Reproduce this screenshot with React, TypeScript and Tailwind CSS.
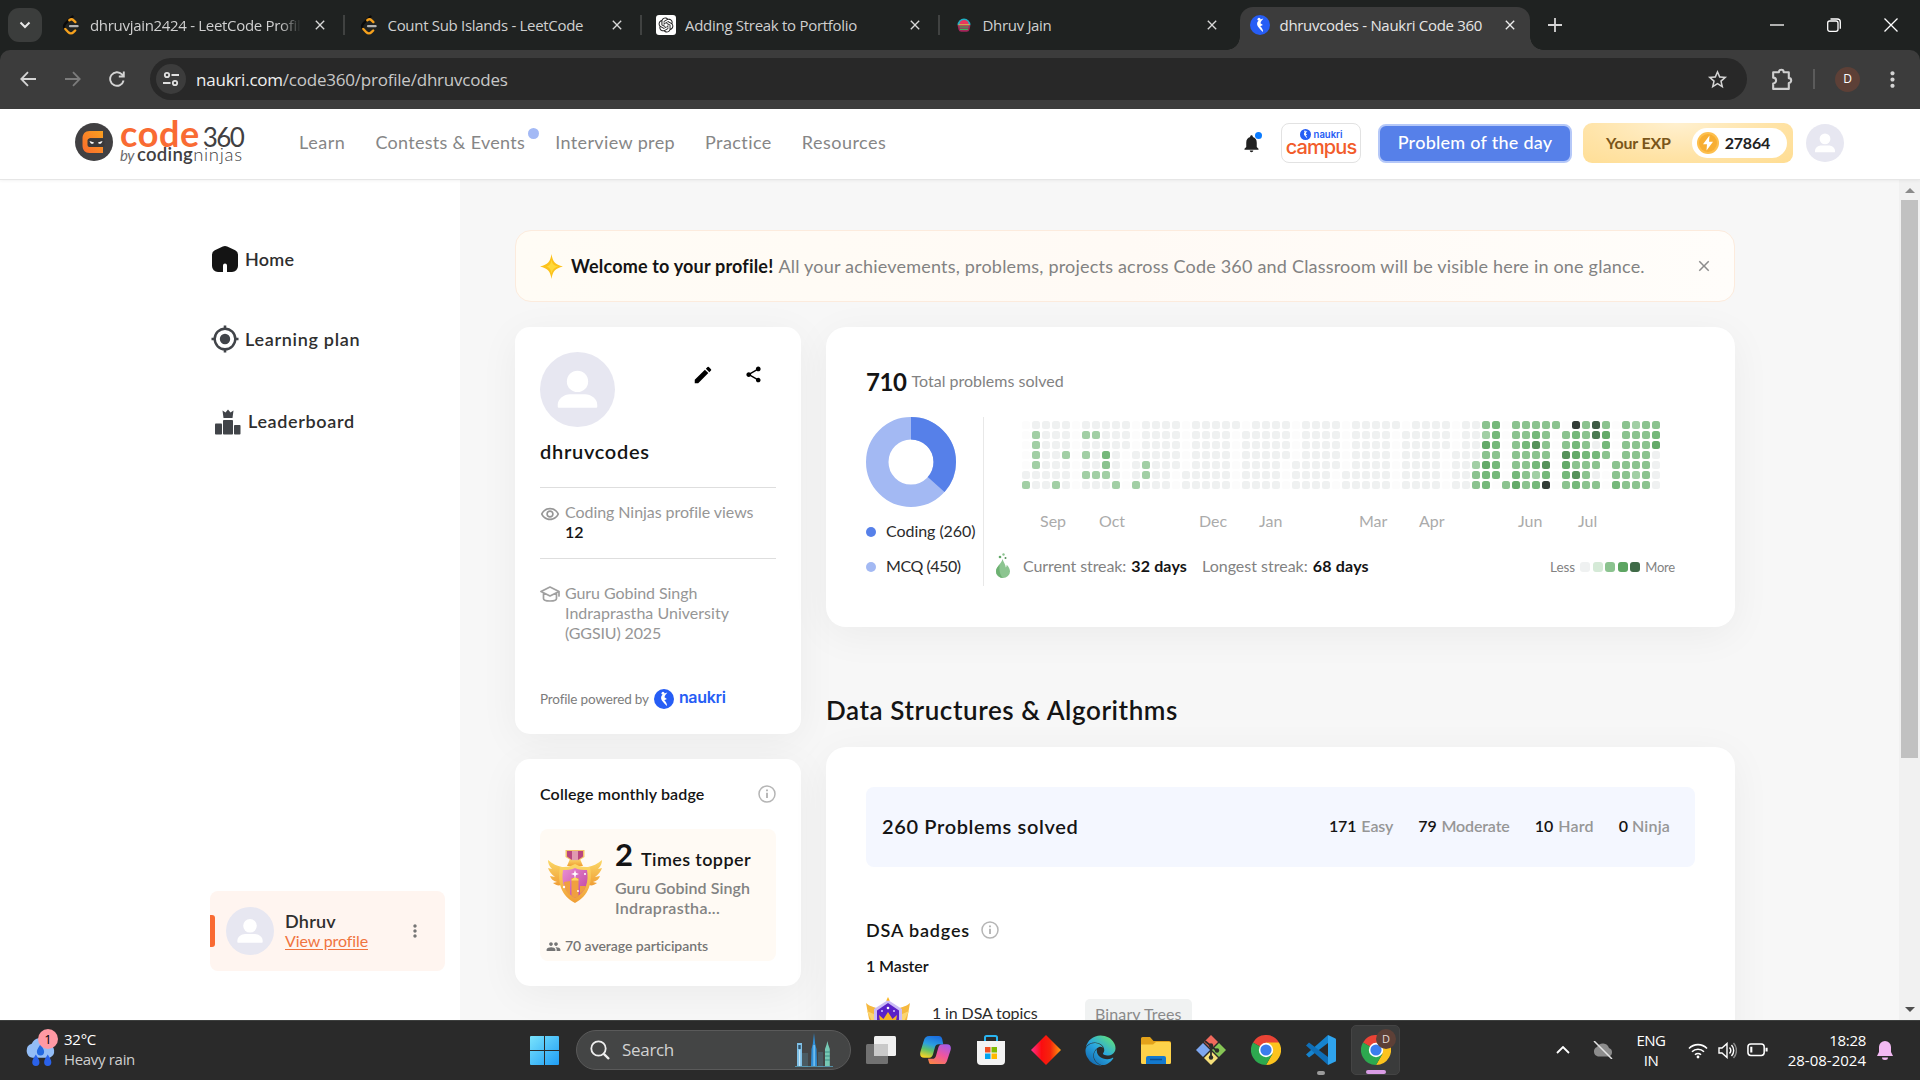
import type { ReactNode } from "react";
import { RiOpenaiFill } from "react-icons/ri";
import { FaEdge } from "react-icons/fa";
import {
  MdModeEdit,
  MdShare,
  MdGroup,
  MdOutlineRemoveRedEye,
  MdNotifications,
  MdStarBorder,
  MdMoreVert,
  MdClose,
} from "react-icons/md";

const segoe = "font-['Open_Sans',sans-serif]";

function LeetCodeIcon() {
  return (
    <svg viewBox="0 0 20 20" className="size-5" fill="none" strokeWidth="2.4" strokeLinecap="round">
      <path d="M11.500 1.500 4.500 8.300c-1.800 1.900-1.800 3.600-.6 5.200" stroke="#0a0a0a" />
      <path d="m4.300 14 3 3.200c1.600 1.600 3.600 1.600 5.200 0l1.700-1.700" stroke="#f5a11d" />
      <path d="M8.300 5.200c1.500-1.200 3-1.100 4.300.1l1.800 1.800" stroke="#f5a11d" />
      <path d="M9 11.200h7.600" stroke="#b3b3b3" strokeWidth="2.200" />
    </svg>
  );
}

function NaukriIcon({ className }: { className: string }) {
  return (
    <svg viewBox="0 0 20 20" className={className}>
      <circle cx="10" cy="10" r="10" fill="#265df5" />
      <circle cx="9" cy="4.300" r="1.500" fill="#fff" />
      <path d="M13.400 3.600c-4.600 1-6.900 3.400-6.100 6.600.4 1.700 2.600 3.700 5.700 6.800.2-2.200-1-4.200-2.700-5.800l2.600-1.300-2.400-1.700c.2-1.600 1.700-2.900 2.900-4.600z" fill="#fff" />
    </svg>
  );
}

function PortfolioIcon() {
  return (
    <svg viewBox="0 0 20 20" className="size-5">
      <path d="M3.500 10a6.500 6.500 0 0 1 13 0z" fill="#1fb0c4" />
      <path d="M5.500 9.500a4.500 4.500 0 0 1 9.200 0z" fill="#e8365f" />
      <path d="M3.500 10h13l-1 4.500a3 3 0 0 1-3 2.200h-5a3 3 0 0 1-3-2.200z" fill="#a3265a" />
      <path d="M5.500 12h9M6 14.300h8" stroke="#39b85c" strokeWidth="1.200" />
      <path d="M4.500 9.800h11" stroke="#f0b93a" strokeWidth="1" />
    </svg>
  );
}

function Avatar({ className }: { className: string }) {
  return (
    <svg viewBox="0 0 74 74" className={className}>
      <circle cx="37" cy="37" r="37" fill="#e7e7f1" />
      <circle cx="37" cy="29" r="10.500" fill="#fff" />
      <path d="M17.500 54v-2c0-6 6.500-10.300 12-10.300h15c5.500 0 12 4.300 12 10.300v2a1 1 0 0 1-1 1h-37a1 1 0 0 1-1-1z" fill="#fff" />
    </svg>
  );
}

function InfoIcon() {
  return (
    <svg viewBox="0 0 18 18" className="size-[18px]" fill="none" stroke="#b5b5b5" strokeWidth="1.500">
      <circle cx="9" cy="9" r="8" />
      <path d="M9 7.800v5.200M9 4.600v1.700" strokeWidth="1.900" />
    </svg>
  );
}

function Tab({ icon, title, tracking, fade }: { icon: ReactNode; title: string; tracking: string; fade?: boolean }) {
  return (
    <div className="flex h-[50px] w-[297.5px] shrink-0 items-center pl-[14px]">
      <span className="flex size-5 items-center justify-center">{icon}</span>
      <span
        className={`ml-[9px] h-6 flex-1 overflow-hidden text-[15px] leading-6 whitespace-nowrap text-[#d0d0d0] ${tracking} ${
          fade ? "[mask-image:linear-gradient(to_right,black_90%,transparent)]" : ""
        }`}
      >
        {title}
      </span>
      <MdClose className="ml-[11px] size-[16px] text-[#d8d8d8]" />
      <span className="ml-[15px] h-[20px] w-[2px] bg-[#404241]" />
    </div>
  );
}

function BrowserTabs() {
  return (
    <div className={`flex h-[50px] items-center bg-[#1f2221] pl-2 ${segoe}`}>
      <div className="mr-[5px] flex size-[34px] items-center justify-center rounded-[11px] bg-[#3b3d3c]">
        <svg viewBox="0 0 12 12" className="size-3" fill="none" stroke="#e8e8e8" strokeWidth="2">
          <path d="m1.500 3.500 4.500 4.500 4.500-4.500" />
        </svg>
      </div>
      <Tab icon={<LeetCodeIcon />} title="dhruvjain2424 - LeetCode Profile" tracking="tracking-[-0.31px]" fade />
      <Tab icon={<LeetCodeIcon />} title="Count Sub Islands - LeetCode" tracking="tracking-[-0.31px]" />
      <Tab
        icon={
          <span className="flex size-5 items-center justify-center rounded-[3px] bg-white">
            <RiOpenaiFill className="size-[18px] text-[#222]" />
          </span>
        }
        title="Adding Streak to Portfolio"
        tracking="tracking-[-0.29px]"
      />
      <div className="flex h-[50px] w-[300px] shrink-0 items-center pl-[14px]">
        <PortfolioIcon />
        <span className="ml-[9px] flex-1 text-[15px] tracking-[-0.32px] text-[#d0d0d0]">Dhruv Jain</span>
        <MdClose className="mr-[20px] size-[16px] text-[#d8d8d8]" />
      </div>
      <div className="flex h-[50px] items-end">
        <span className="-ml-[13px] size-[13px] bg-[radial-gradient(circle_at_0_0,transparent_12.500px,#3c3c3c_13px)]" />
        <div className="flex h-[43px] w-[290px] items-center rounded-t-[13px] bg-[#3c3c3c] pb-[7px] pl-[10px]">
          <NaukriIcon className="size-5" />
          <span className="ml-[10px] flex-1 text-[15px] tracking-[-0.3px] whitespace-nowrap text-[#e6e6e6]">
            dhruvcodes - Naukri Code 360
          </span>
          <MdClose className="mr-[12px] size-[16px] text-[#ececec]" />
        </div>
        <span className="size-[13px] bg-[radial-gradient(circle_at_100%_0,transparent_12.500px,#3c3c3c_13px)]" />
      </div>
      <svg viewBox="0 0 14 14" className="ml-[5px] size-[14px]" stroke="#d5d5d5" strokeWidth="1.800">
        <path d="M7 0v14M0 7h14" />
      </svg>
      <div className="ml-auto flex items-center text-white">
        <svg viewBox="0 0 14 14" className="mr-[43px] size-[14px]" stroke="currentColor" strokeWidth="1.300">
          <path d="M0 7h14" />
        </svg>
        <svg viewBox="0 0 14 14" className="mr-[43px] size-[14px]" fill="none" stroke="currentColor" strokeWidth="1.300">
          <rect x="0.700" y="3" width="10.300" height="10.300" rx="2" />
          <path d="M3.500 1h6.800a3 3 0 0 1 3 3v6.800" />
        </svg>
        <svg viewBox="0 0 14 14" className="mr-[22px] size-[14px]" stroke="currentColor" strokeWidth="1.300">
          <path d="m.5.5 13 13M13.500.5l-13 13" />
        </svg>
      </div>
    </div>
  );
}

function AddressBar() {
  return (
    <div className="h-[59px] bg-[#1f2221]">
      <div className={`flex h-[59px] items-center rounded-t-[10px] bg-[#3c3c3c] pb-px pl-[20px] text-[#d0d0d0] ${segoe}`}>
        <svg viewBox="0 0 16 16" className="size-4 shrink-0" fill="none" stroke="#d4d4d4" strokeWidth="1.800">
          <path d="M16 8H1.500M8 1.200 1.300 8 8 14.800" />
        </svg>
        <svg viewBox="0 0 16 16" className="ml-[29px] size-4 shrink-0" fill="none" stroke="#7b7b7b" strokeWidth="1.800">
          <path d="M0 8h14.500M8 1.200 14.700 8 8 14.800" />
        </svg>
        <svg viewBox="0 0 16 16" className="ml-[28px] size-4 shrink-0" fill="none" stroke="#d4d4d4" strokeWidth="1.900">
          <path d="M14.600 9.500A6.800 6.800 0 1 1 13 3.400l1.500 1.600M14.800.5v5h-5" />
        </svg>
        <div className="ml-[25px] flex h-[42px] w-[1597px] shrink-0 items-center rounded-full bg-[#282828] pl-[6px]">
          <span className="flex size-[30px] items-center justify-center rounded-full bg-[#3c3c3c]">
            <svg viewBox="0 0 16 16" className="size-4" fill="none" stroke="#e0e0e0" strokeWidth="1.800">
              <circle cx="4" cy="4" r="2.200" />
              <circle cx="12" cy="12" r="2.200" />
              <path d="M8.500 4H16M0 12h7.500" />
            </svg>
          </span>
          <span className="ml-[10px] flex-1 pt-px text-[17px] tracking-[-0.22px] text-[#c8c8c8]">
            <span className="text-[#f0f0f0]">naukri.com</span>/code360/profile/dhruvcodes
          </span>
          <MdStarBorder className="mr-[18px] size-[23px] text-[#d4d4d4]" />
        </div>
        <svg viewBox="0 0 24 24" className="ml-[22px] size-[25px] shrink-0" fill="none" stroke="#cfcfcf" strokeWidth="2" strokeLinejoin="round">
          <path d="M4 5h5.500a2.300 2.300 0 0 1 4.600 0H19v5.700a2.300 2.300 0 0 1 0 4.600V21H4v-5.200a2.800 2.800 0 0 0 0-5.600z" />
        </svg>
        <span className="ml-[19px] h-5 w-[2px] bg-[#5b5b5b]" />
        <span className="ml-[20px] flex size-[25px] items-center justify-center rounded-full bg-[#5d4037] text-[12px] text-white">
          D
        </span>
        <MdMoreVert className="ml-[20px] size-[25px] text-[#d4d4d4]" />
      </div>
    </div>
  );
}

function Code360Logo() {
  return (
    <div className="flex w-[170px] items-center">
      <svg viewBox="0 0 38 38" className="-mt-[3px] size-[38px]">
        <defs>
          <linearGradient id="ninja" x1="0" y1="1" x2="1" y2="0">
            <stop offset="0" stopColor="#fb6a2d" />
            <stop offset="1" stopColor="#f9a01f" />
          </linearGradient>
        </defs>
        <circle cx="19" cy="19" r="19" fill="#414042" />
        <path d="M28 8v7H14.500v9H28v6H14.500C10 30 7.500 27 7.500 22.500v-7C7.500 11 10 8 14.500 8z" fill="url(#ninja)" />
        <rect x="12.500" y="15.500" width="17" height="8.500" rx="2" fill="#3a393b" />
        <path d="m14.500 18 4.500 1.500c-.5 2-3.500 2-4.500-1.500zM27.500 18 23 19.500c.5 2 3.500 2 4.500-1.500z" fill="#fff" />
      </svg>
      <div className="-mt-[4px] ml-[7px] font-['Lato',sans-serif]">
        <div className="flex h-[26px] items-baseline pt-px leading-[27px] text-[#414042]">
          <span className="text-[36px] leading-[27px] font-bold tracking-[0.6px] text-[#f96b33]">code</span>
          <span className="ml-[3px] text-[26px] leading-[27px] tracking-[-1.6px]">360</span>
        </div>
        <div className="flex h-[19px] items-baseline text-[18.500px] leading-[19px] text-[#414042]">
          <span className="mr-[3px] text-[15px] tracking-[-0.5px] text-[#6b6a6c] italic">by</span>
          <span className="font-semibold tracking-[0.3px]">coding</span>
          <span className="font-light tracking-[0.7px]">ninjas</span>
        </div>
      </div>
    </div>
  );
}

function SiteHeader() {
  return (
    <header className="relative z-10 flex h-[71px] items-center border-b border-[#e6e6e6] bg-white pb-[2px] pl-[75px] text-[18px] text-[#868686] shadow-[0_1px_3px_rgba(0,0,0,0.05)]">
      <Code360Logo />
      <nav className="-mt-px ml-[54px] flex items-center whitespace-nowrap">
        <span className="tracking-[0.55px]">Learn</span>
        <span className="relative ml-[30px] tracking-[0.300px]">
          Contests &amp; Events
          <span className="absolute -top-[1px] -right-[14px] size-[11px] rounded-full bg-[#a3b9f5]" />
        </span>
        <span className="ml-[30px] tracking-[0.380px]">Interview prep</span>
        <span className="ml-[30px] tracking-[0.420px]">Practice</span>
        <span className="ml-[30px] tracking-[0.500px]">Resources</span>
      </nav>
      <div className="relative ml-auto">
        <MdNotifications className="size-[21px] text-[#212121]" />
        <span className="absolute -top-px right-0 size-[7px] rounded-full bg-[#0a7bff]" />
      </div>
      <div className="ml-[19px] flex h-[40px] w-[80px] flex-col items-center rounded-[8px] border border-[#e2e2e2]">
        <div className="mt-[5px] flex h-[11px] items-center">
          <NaukriIcon className="size-[11px]" />
          <span className="ml-[3px] font-['Inter',sans-serif] text-[9.500px] leading-[10px] font-semibold text-[#265df5]">naukri</span>
        </div>
        <span className="-mt-[2px] font-['Inter',sans-serif] text-[20px] leading-[19px] font-medium tracking-[-0.900px] text-[#f25c2b]">
          campus
        </span>
      </div>
      <div className="ml-[17px] flex h-[39px] w-[194px] items-center justify-center rounded-[8px] border-2 border-[#b5c8f8] bg-[#5680e9] pb-px font-medium tracking-[0.260px] text-white">
        Problem of the day
      </div>
      <div className="ml-[11px] flex h-[40px] w-[210px] items-center rounded-[9px] bg-[radial-gradient(ellipse_at_45%_0%,#fff0cf_0%,#ffe3a6_60%,#ffdd92_100%)] pl-[23px] text-[16px] font-bold text-[#7a561a]">
        <span className="tracking-[-0.180px]">Your EXP</span>
        <div className="ml-[21px] flex h-[30px] w-[95px] items-center rounded-full bg-white pl-[5px]">
          <svg viewBox="0 0 22 22" className="size-[22px]">
            <circle cx="11" cy="11" r="11" fill="#fdbf4d" />
            <circle cx="11" cy="11" r="9" fill="#f7ae33" />
            <path d="M12.500 3.500 6 12.200h4L9.500 18.500 16 9.800h-4z" fill="#fff" />
          </svg>
          <span className="ml-[6px] font-bold tracking-[-0.200px] text-[#222]">27864</span>
        </div>
      </div>
      <Avatar className="mr-[76px] ml-[13px] size-[38px]" />
    </header>
  );
}

function Sidebar() {
  return (
    <aside className="flex w-[460px] shrink-0 flex-col bg-white pl-[210px] text-[18px] font-semibold text-[#2f2f2f]">
      <div className="mt-[64px] flex h-[30px] items-center">
        <svg viewBox="0 0 26 26" className="ml-[2px] size-[26px]">
          <path d="M10.800.6a5 5 0 0 1 4.400 0l8 3.700A4.600 4.600 0 0 1 26 8.500V20a6 6 0 0 1-6 6h-5v-6.500a2 2 0 0 0-4 0V26H6a6 6 0 0 1-6-6V8.500a4.600 4.600 0 0 1 2.800-4.200z" fill="#141414" />
        </svg>
        <span className="ml-[7px] tracking-[0.250px]">Home</span>
      </div>
      <div className="mt-[50px] flex h-[30px] items-center">
        <svg viewBox="0 0 28 28" className="-mt-px ml-px size-[28px]" fill="none" stroke="#414449" strokeWidth="2.400">
          <circle cx="14" cy="14" r="10.300" />
          <circle cx="14" cy="14" r="5.200" fill="#414449" stroke="none" />
          <path d="M14 .5V4M14 24v3.500M.5 14H4M24 14h3.500" strokeWidth="2.600" />
        </svg>
        <span className="ml-[6px] tracking-[0.700px]">Learning plan</span>
      </div>
      <div className="mt-[52px] flex h-[30px] items-center">
        <svg viewBox="0 0 26 26" className="mt-px ml-[5px] size-[26px]" fill="#414449">
          <rect x="0" y="14.500" width="7" height="11" rx=".8" />
          <rect x="8" y="11" width="10" height="14.500" rx=".8" />
          <rect x="19" y="16" width="6.500" height="9.500" rx=".8" />
          <path d="m7.500 1.500 3 2L13 .5l2.500 3 3-2L17.500 9h-9z" />
        </svg>
        <span className="ml-[7px] tracking-[0.640px]">Leaderboard</span>
      </div>
      <div className="mt-auto mb-[49px] flex h-[80px] w-[235px] items-center rounded-[8px] bg-[#fff5f0]">
        <span className="h-[32px] w-[5px] rounded-r-[3px] bg-[#f96b33]" />
        <Avatar className="ml-[11px] size-[48px]" />
        <div className="ml-[11px] leading-5">
          <div className="tracking-[0.250px]">Dhruv</div>
          <div className="text-[16px] font-normal tracking-[-0.120px] text-[#f0743f] underline underline-offset-2">View profile</div>
        </div>
        <MdMoreVert className="mr-[20px] ml-auto size-5 text-[#757575]" />
      </div>
    </aside>
  );
}

function WelcomeBanner() {
  return (
    <div className="flex h-[72px] w-[1220px] items-center rounded-[16px] border border-[#fcebdd] bg-[linear-gradient(90deg,#fffcf5,#fffaf5_50%,#fffdfa)] pl-[23px] text-[18px] whitespace-nowrap">
      <svg viewBox="0 0 24 24" className="size-[25px]">
        <path d="M12 0c1.200 7.500 3.500 10.200 11 12-7.500 1.800-9.800 4.500-11 12-1.200-7.500-3.500-10.200-11-12C8.500 10.200 10.800 7.500 12 0z" fill="#fcc21b" />
        <path d="M12 5c.5 4.500 2.500 6.500 7 7-4 .8-6 2.500-7 7-.5-4.500-2.500-6.500-5-7 3-.5 4.500-2.500 5-7z" fill="#ffd93b" />
      </svg>
      <span className="ml-[7px] font-bold tracking-[0.180px] text-[#141414]">Welcome to your profile!</span>
      <span className="ml-[5px] tracking-[0.200px] text-[#828282]">
        All your achievements, problems, projects across Code 360 and Classroom will be visible here in one glance.
      </span>
      <MdClose className="mr-[21px] ml-auto size-[18px] text-[#8c8c8c]" />
    </div>
  );
}

const cardShadow = "shadow-[0_8px_40px_rgba(0,0,0,0.050)]";

function ProfileCard() {
  return (
    <section className={`flex h-[407px] flex-col rounded-[15px] bg-white px-[25px] pt-[25px] text-[16px] leading-5 text-[#969696] ${cardShadow}`}>
      <div className="flex items-start">
        <Avatar className="size-[75px]" />
        <MdModeEdit className="mt-[12px] mr-[-1px] ml-auto size-[22px] text-black" />
        <MdShare className="mt-[13px] mr-[13px] ml-[31px] size-[19px] text-black" />
      </div>
      <h2 className="mt-[11px] text-[20px] leading-[26px] font-semibold tracking-[0.700px] text-[#141414]">dhruvcodes</h2>
      <div className="mt-[23px] h-px bg-[#dedede]" />
      <div className="mt-[14px] flex">
        <MdOutlineRemoveRedEye className="mt-[2px] size-[20px] text-[#969696]" />
        <div className="ml-[5px]">
          <div className="tracking-[-0.060px] whitespace-nowrap">Coding Ninjas profile views</div>
          <div className="font-semibold text-[#141414]">12</div>
        </div>
      </div>
      <div className="mt-[16px] h-px bg-[#dedede]" />
      <div className="mt-[24px] flex">
        <svg viewBox="0 0 20 16" className="mt-[3px] h-4 w-5" fill="none" stroke="#a0a0a0" strokeWidth="1.700" strokeLinejoin="round" strokeLinecap="round">
          <path d="M10 1 1 5.500 10 10l9-4.500zM3.500 7v5.500c0 1.500 1.500 2.500 6.500 2.500s6.500-1 6.500-2.500V7M19 5.500V10" />
        </svg>
        <div className="ml-[5px] tracking-[-0.060px] whitespace-nowrap">
          <div>Guru Gobind Singh</div>
          <div className="tracking-[0.020px]">Indraprastha University</div>
          <div className="tracking-[-0.140px]">(GGSIU) 2025</div>
        </div>
      </div>
      <div className="mt-[45px] flex items-center">
        <span className="mt-px text-[13.500px] tracking-[-0.160px] text-[#7c7c7c]">Profile powered by</span>
        <NaukriIcon className="ml-[5px] size-[20px]" />
        <span className="-mt-[3px] ml-[5px] font-['Inter',sans-serif] text-[16px] font-semibold tracking-[-0.300px] text-[#265df5]">naukri</span>
      </div>
    </section>
  );
}

function MedalIcon() {
  return (
    <svg viewBox="0 0 56 53" className="h-[53px] w-[56px]">
      <defs>
        <linearGradient id="gold" x1="0" y1="0" x2="0" y2="1">
          <stop offset="0" stopColor="#fbd968" />
          <stop offset="1" stopColor="#f09e35" />
        </linearGradient>
        <linearGradient id="pink" x1="0" y1="0" x2="1" y2="1">
          <stop offset="0" stopColor="#e98fd3" />
          <stop offset="1" stopColor="#bd3f9f" />
        </linearGradient>
      </defs>
      <path d="M1 10c5 4 9 6 14 7l-1 18c-3 1-5 0-8-2l4-1c-4-1-6-3-7-6l5 1C4 24 2 21 1 18l4 1C2 16 1 13 1 10z" fill="url(#gold)" />
      <path d="M55 10c-5 4-9 6-14 7l1 18c3 1 5 0 8-2l-4-1c4-1 6-3 7-6l-5 1c4-3 6-6 7-9l-4 1c3-3 4-6 4-9z" fill="url(#gold)" />
      <path d="M23 9h10l3 7H20z" fill="url(#gold)" />
      <path d="M18.500 0h19v7l-6.500 4h-6l-6.500-4z" fill="#f2c46a" />
      <path d="M20 1h16v5.500L31 10h-6l-5-3.500z" fill="#b9467f" />
      <path d="M25 1h6v9h-6z" fill="#e09ab0" />
      <path d="M28 14c5 3 10 3 15 3 3 15-1 29-15 36C14 46 10 32 13 17c5 0 10 0 15-3z" fill="url(#gold)" />
      <path d="M28 18c4 2 8 2 12 2 2 12-1 22-12 28-11-6-14-16-12-28 4 0 8 0 12-2z" fill="url(#pink)" />
      <path d="M24.500 46V28h7v18L28 48zM17 32l6-1v14c-4-3-5.500-8-6-13zM39 36h-6v8c3-2 5-5 6-8z" fill="#f0a040" />
      <path d="M24.500 29.500 28 27l3.500 2.500v1h-7z" fill="#fbd968" />
      <path d="m28 20 1 3 3 1-3 1-1 3-1-3-3-1 3-1z" fill="#fff" />
      <circle cx="17" cy="37" r="1.200" fill="#fff" />
      <circle cx="38" cy="24" r="1" fill="#fff" />
      <circle cx="31" cy="41" r="1" fill="#fff" />
    </svg>
  );
}

function CollegeBadgeCard() {
  return (
    <section className={`h-[227px] rounded-[15px] bg-white px-[25px] pt-[25px] text-[16px] leading-5 font-semibold ${cardShadow}`}>
      <div className="flex h-5 items-center justify-between">
        <span className="tracking-[0.150px] text-[#141414]">College monthly badge</span>
        <InfoIcon />
      </div>
      <div className="mt-[25px] flex h-[132px] w-[236px] flex-col rounded-[8px] bg-[#fffaf4] pl-[6px]">
        <div className="flex">
          <div className="mt-[21px] ml-px">
            <MedalIcon />
          </div>
          <div className="mt-[7px] ml-[12px] whitespace-nowrap">
            <div className="flex h-[42px] items-baseline text-[#141414]">
              <span className="text-[31px] leading-[36px] font-bold">2</span>
              <span className="ml-[8px] text-[18px] tracking-[0.390px]">Times topper</span>
            </div>
            <div className="tracking-[0.060px] text-[#828282]">Guru Gobind Singh</div>
            <div className="tracking-[0.310px] text-[#828282]">Indraprastha...</div>
          </div>
        </div>
        <div className="mt-[18px] flex items-center text-[14px] tracking-[-0.050px] text-[#757575]">
          <MdGroup className="size-[15px]" />
          <span className="ml-[4px] leading-5">70 average participants</span>
        </div>
      </div>
    </section>
  );
}

const activity = [
  ".oooo.ooooo.oooo.ooooo.oooo.oooo.ooooo.oooo.oo23.22222.X2Y2.2122",
  ".1ooo.11ooo.oooo.oooo.ooooo.oooo.oooo.ooooo.oo13.2232.232Z4.2223",
  ".1ooo.ooooo.oooo.oooo.ooooo.oooo.oooo.ooooo.oo43.2352.232o3.2224",
  ".1oo1.1o3o.ooooo.oooo.ooooo.oooo.oooo.oooo.ooo22.2222.54332.222o",
  ".1ooo.oo2o.o1ooo.oooo.oooo.ooooo.oooo.oooo.oo143.2235.4222.2222o",
  "ooooo.111o.o1oo.ooooo.oooo.oooo.ooooo.oooo.oo233.3213.352o.2212o",
  "1oo1o.ooo1.1ooo.ooooo.oooo.oooo.ooooo.oooo.oo23.2423X.2322.3222o",
];

const shade: Record<string, string> = {
  ".": "bg-[#fcfcfc]",
  o: "bg-[#eff1f1]",
  "1": "bg-[#a2cfa5]",
  "2": "bg-[#8bc38f]",
  "3": "bg-[#75b87a]",
  "4": "bg-[#64aa69]",
  "5": "bg-[#56925b]",
  X: "bg-[#333d38]",
  Y: "bg-[#3e5b45]",
  Z: "bg-[#4b7a52]",
};

function Heatmap() {
  return (
    <div className="flex flex-col gap-[2px]">
      {activity.map((row, r) => (
        <div key={r} className="flex gap-[2px]">
          {row.split("").map((c, i) => (
            <span key={i} className={`size-2 rounded-[2.500px] ${shade[c]}`} />
          ))}
        </div>
      ))}
    </div>
  );
}

const months: [string, string][] = [
  ["Sep", "ml-[18px] w-[59px]"],
  ["Oct", "w-[100px]"],
  ["Dec", "w-[60px]"],
  ["Jan", "w-[100px]"],
  ["Mar", "w-[60px]"],
  ["Apr", "w-[99px]"],
  ["Jun", "w-[60px]"],
  ["Jul", "w-[40px]"],
];

function SolvedCard() {
  return (
    <section className={`h-[300px] rounded-[20px] bg-white pt-[40px] pl-[40px] text-[16px] leading-5 ${cardShadow}`}>
      <div className="flex h-[30px] items-center">
        <span className="-mt-px text-[24px] leading-[30px] font-bold tracking-[-0.400px] text-[#141414]">710</span>
        <span className="-mt-[2px] ml-[5px] text-[#828282]">Total problems solved</span>
      </div>
      <div className="mt-[20px] flex h-[169px]">
        <div className="w-[118px] shrink-0 border-r border-[#e8e8e8]">
          <svg viewBox="0 0 90 90" className="size-[90px]" fill="none" strokeWidth="22.500">
            <circle cx="45" cy="45" r="33.750" stroke="#a3b9f3" />
            <circle cx="45" cy="45" r="33.750" stroke="#5680e9" pathLength="710" strokeDasharray="260 450" transform="rotate(-90 45 45)" />
          </svg>
          <div className="mt-[14px] flex items-center whitespace-nowrap text-[#2b2b2b]">
            <span className="mt-px mr-[10px] size-[10px] rounded-full bg-[#5680e9]" />
            <span className="tracking-[-0.050px]">Coding (260)</span>
          </div>
          <div className="mt-[15px] flex items-center text-[#2b2b2b]">
            <span className="mt-px mr-[10px] size-[10px] rounded-full bg-[#a3b9f3]" />
            <span className="tracking-[-0.450px]">MCQ (450)</span>
          </div>
        </div>
        <div className="flex w-[702px] flex-col">
          <div className="mt-[4px] ml-[38px]">
            <Heatmap />
            <div className="mt-[22px] flex text-[#ababab]">
              {months.map(([m, cls]) => (
                <span key={m} className={cls}>
                  {m}
                </span>
              ))}
            </div>
          </div>
          <div className="mt-[21px] ml-[12px] flex h-[28px] items-center whitespace-nowrap">
            <svg viewBox="0 0 14 25" className="-mt-[2px] h-[25px] w-[14px]">
              <path d="M6.500 6c1 3.500 3 5 3.300 8.500.7-.8.900-1.700.9-2.700 2 2 3.300 4.200 3.300 6.700a7 6.500 0 0 1-14 0C0 13.500 5.500 11 6.500 6z" fill="#8cc590" />
              <path d="M7 25a7 6.500 0 0 1-7-6.500c0-3 2-5 3.700-7.200C3 16 3.500 22 7 25z" fill="#6db172" />
              <circle cx="4" cy="4" r="1.300" fill="#62a867" />
              <circle cx="7.500" cy="1.500" r="1.200" fill="#8bc38f" />
              <circle cx="9.500" cy="5" r="1" fill="#559159" />
            </svg>
            <span className="ml-[13px] tracking-[-0.090px] text-[#828282]">Current streak:</span>
            <span className="ml-[5px] font-bold tracking-[0.150px] text-[#141414]">32 days</span>
            <span className="ml-[15px] text-[#828282]">Longest streak:</span>
            <span className="ml-[5px] font-bold tracking-[0.200px] text-[#141414]">68 days</span>
            <div className="mt-px mr-[11px] ml-auto flex items-center text-[13px] text-[#828282]">
              <span className="mr-[5px] text-[13.500px]">Less</span>
              <div className="flex gap-[2.500px]">
                <span className="size-[10px] rounded-[3px] bg-[#eff1f1]" />
                <span className="size-[10px] rounded-[3px] bg-[#d5ead7]" />
                <span className="size-[10px] rounded-[3px] bg-[#8bc38f]" />
                <span className="size-[10px] rounded-[3px] bg-[#5da562]" />
                <span className="size-[10px] rounded-[3px] bg-[#3f6a47]" />
              </div>
              <span className="ml-[5px] tracking-[-0.200px]">More</span>
            </div>
          </div>
        </div>
      </div>
    </section>
  );
}

function DsaBadgeIcon() {
  return (
    <svg viewBox="0 0 44 44" className="h-11 w-11">
      <path d="M0 6c3 3 8 4 10 5v20L3 22zM44 6c-3 3-8 4-10 5v20l7-8z" fill="#f6b93f" />
      <path d="M1 14l9 4v15zM43 14l-9 4v15z" fill="#fbd571" />
      <path d="m22 3 14 9v20L22 42 8 32V12z" fill="#cbbcf5" />
      <path d="m22 6 11 7.500V33l-11 8-11-8V13.500z" fill="#5a22c8" />
      <path d="m13 18 4.500 4L22 15l4.500 7 4.500-4-2 12H15z" fill="#f9b624" />
      <path d="m22 0 1.800 3.800h-3.600z" fill="#f9b624" />
      <circle cx="22" cy="11" r="1.300" fill="#fff" />
      <circle cx="16" cy="14" r="1" fill="#d9c9ff" />
      <circle cx="28" cy="14" r="1" fill="#d9c9ff" />
    </svg>
  );
}

function DsaCard() {
  return (
    <section className={`h-[420px] rounded-[20px] bg-white px-[40px] pt-[40px] text-[16px] leading-5 ${cardShadow}`}>
      <div className="flex h-[80px] items-center rounded-[8px] bg-[#f4f7ff] pr-[25px] pb-[2px] pl-[16px] font-semibold text-[#141414]">
        <span className="text-[20px] tracking-[0.630px]">260 Problems solved</span>
        <div className="ml-auto flex gap-[25px]">
          <span className="tracking-[-0.100px]">
            171 <span className="ml-px text-[#969696]">Easy</span>
          </span>
          <span className="tracking-[-0.150px]">
            79 <span className="ml-px text-[#969696]">Moderate</span>
          </span>
          <span>
            10 <span className="ml-px tracking-[0.200px] text-[#969696]">Hard</span>
          </span>
          <span>
            0 <span className="tracking-[0.180px] text-[#969696]">Ninja</span>
          </span>
        </div>
      </div>
      <div className="mt-[51px] flex h-6 items-center">
        <span className="-mt-px mr-[11px] text-[18px] font-semibold tracking-[0.850px] text-[#141414]">DSA badges</span>
        <InfoIcon />
      </div>
      <div className="mt-[14px] font-semibold tracking-[-0.100px] text-[#141414]">1 Master</div>
      <div className="mt-[21px] flex items-start">
        <DsaBadgeIcon />
        <span className="mt-[6px] ml-[22px] w-[153px] tracking-[-0.130px] text-[#2b2b2b]">1 in DSA topics</span>
        <span className="mt-[2px] h-[30px] rounded-[5px] bg-[#f0f2f2] px-[10px] leading-[29px] tracking-[0.120px] text-[#8a8a8a]">
          Binary Trees
        </span>
      </div>
    </section>
  );
}

function Scrollbar() {
  return (
    <div className="flex w-[21px] shrink-0 flex-col items-center bg-[#f1f1f1] py-[8px]">
      <span className="border-x-[5px] border-b-[5px] border-x-transparent border-b-[#8a8a8a]" />
      <span className="mt-[7px] h-[558px] w-[17px] bg-[#c1c1c1]" />
      <span className="mt-auto border-x-[5px] border-t-[5px] border-x-transparent border-t-[#505050]" />
    </div>
  );
}

function ChromeIcon() {
  return (
    <svg viewBox="0 0 30 30" className="size-[30px]">
      <path d="M15 15 2 7.500A15 15 0 0 1 28 7.500z" fill="#e94335" />
      <path d="M15 15V7.500h13A15 15 0 0 1 15 30l6.500-11.300z" fill="#fcc31e" />
      <path d="M15 15 2 7.500A15 15 0 0 0 15 30l6.500-11.300z" fill="#2da94f" />
      <circle cx="15" cy="15" r="7.200" fill="#fff" />
      <circle cx="15" cy="15" r="5.600" fill="#3b7ded" />
    </svg>
  );
}

function AppSlot({ children }: { children: ReactNode }) {
  return <div className="relative flex h-[59px] w-[55px] shrink-0 items-center justify-center">{children}</div>;
}

function TaskbarApps() {
  return (
    <div className="ml-[2px] flex">
      <AppSlot>
        <svg viewBox="0 0 30 28" className="w-[30px]">
          <rect x="8" y="0" width="22" height="20" rx="1.500" fill="#f1f1f1" />
          <rect x="0" y="8" width="22" height="20" rx="1.500" fill="#8a8a8a" fillOpacity=".75" />
          <path d="M8 8h14v12H8z" fill="#c9c9c9" />
        </svg>
      </AppSlot>
      <AppSlot>
        <svg viewBox="0 0 30 28" className="w-[31px]">
          <defs>
            <linearGradient id="cpA" x1="0.600" y1="0" x2="0.300" y2="1">
              <stop offset="0" stopColor="#1b6fe0" />
              <stop offset=".4" stopColor="#2c9fe0" />
              <stop offset=".65" stopColor="#5cc06a" />
              <stop offset="1" stopColor="#f5d327" />
            </linearGradient>
            <linearGradient id="cpB" x1="0.800" y1="0" x2="0.300" y2="1">
              <stop offset="0" stopColor="#a55be8" />
              <stop offset=".5" stopColor="#f0559f" />
              <stop offset="1" stopColor="#fb8348" />
            </linearGradient>
          </defs>
          <path d="M21 28h-9c-2 0-3-1-3.500-3l-.8-3H12c2 0 3-1 3.500-3l2-7c.6-2 1.500-4 4-4H26c3.500 0 4.500 2.500 3.500 6L26.500 23c-1 3.500-2.500 5-5.500 5z" fill="url(#cpB)" />
          <path d="M9 0h9c2 0 3 1 3.500 3l1 5H18c-2 0-3 1-3.500 3l-2 7c-.6 2-1.500 3-3.500 3H4C.5 21-.5 18.500.5 15L3.500 5C4.500 1.500 6 0 9 0z" fill="url(#cpA)" />
        </svg>
      </AppSlot>
      <AppSlot>
        <svg viewBox="0 0 30 30" className="size-[30px]">
          <path d="M9 7V2.500A1.500 1.500 0 0 1 10.500 1h9A1.500 1.500 0 0 1 21 2.500V7" fill="none" stroke="#29b4f0" strokeWidth="2" />
          <path d="M1 6h28v20a4 4 0 0 1-4 4H5a4 4 0 0 1-4-4z" fill="#f3f3f3" />
          <path d="M9 12h5.500v5.500H9z" fill="#f25022" />
          <path d="M15.500 12H21v5.500h-5.500z" fill="#7fba00" />
          <path d="M9 18.500h5.500V24H9z" fill="#00a4ef" />
          <path d="M15.500 18.500H21V24h-5.500z" fill="#ffb900" />
        </svg>
      </AppSlot>
      <AppSlot>
        <svg viewBox="0 0 30 30" className="size-[30px]">
          <defs>
            <linearGradient id="dia">
              <stop offset="0" stopColor="#ff2f8f" />
              <stop offset=".35" stopColor="#fb0d10" />
              <stop offset=".65" stopColor="#f6250b" />
              <stop offset="1" stopColor="#ff9c10" />
            </linearGradient>
          </defs>
          <path d="m15 0 15 15-15 15L0 15z" fill="url(#dia)" />
        </svg>
      </AppSlot>
      <AppSlot>
        <svg className="absolute size-0">
          <defs>
            <linearGradient id="edge" x1="0" y1="1" x2="0.800" y2="0">
              <stop offset="0" stopColor="#0c59a4" />
              <stop offset=".55" stopColor="#2aa7e0" />
              <stop offset="1" stopColor="#5fe07c" />
            </linearGradient>
          </defs>
        </svg>
        <FaEdge className="size-[31px]" fill="url(#edge)" stroke="none" />
      </AppSlot>
      <AppSlot>
        <svg viewBox="0 0 30 27" className="w-[30px]">
          <path d="M0 1.500A1.500 1.500 0 0 1 1.500 0H9l3.500 4H28a2 2 0 0 1 2 2v6H0z" fill="#e3a21a" />
          <path d="M0 7.500h12L15 5h13.500A1.500 1.500 0 0 1 30 6.500v19a1.500 1.500 0 0 1-1.500 1.500h-27A1.500 1.500 0 0 1 0 25.500z" fill="#fdd24a" />
          <path d="M5 27v-6a2 2 0 0 1 2-2h16a2 2 0 0 1 2 2v6z" fill="#1379ce" />
          <path d="M9 22.500h12" stroke="#0b4f91" strokeWidth="1.500" />
        </svg>
      </AppSlot>
      <AppSlot>
        <svg viewBox="0 0 30 30" className="size-[30px]">
          <path d="m15 0 7 7-7 7-7-7z" fill="#f0695c" />
          <path d="m7 8 7 7-7 7-7-7z" fill="#7ea7f0" />
          <path d="m23 8 7 7-7 7-7-7z" fill="#86c555" />
          <path d="m15 16 7 7-7 7-7-7z" fill="#f5df7a" />
          <path d="m9 6 6 5v12M15 11l6 5" fill="none" stroke="#2b2b2b" strokeWidth="1.800" />
          <circle cx="15" cy="10.500" r="2.200" fill="#2b2b2b" />
          <circle cx="15" cy="22.500" r="2.200" fill="#2b2b2b" />
          <circle cx="21" cy="15.500" r="2.200" fill="#2b2b2b" />
        </svg>
      </AppSlot>
      <AppSlot>
        <ChromeIcon />
      </AppSlot>
      <AppSlot>
        <svg viewBox="0 0 30 30" className="size-[30px]">
          <path d="M22 0 0 19.500 3 22.500 22 8z" fill="#1684cf" />
          <path d="M22 30 0 10.500 3 7.500 22 22z" fill="#0f6fb8" />
          <path d="m22 0 7 3.200a1.500 1.500 0 0 1 1 1.400v20.800a1.500 1.500 0 0 1-1 1.400L22 30z" fill="#2fa4ee" />
        </svg>
        <span className="absolute bottom-[5px] h-1 w-2 rounded-full bg-[#9b9b9b]" />
      </AppSlot>
      <AppSlot>
        <div className="relative flex h-[50px] w-[49px] items-center justify-center rounded-[5px] border border-[#444] bg-[#3a3b3b]">
          <ChromeIcon />
          <span className="absolute top-[3px] right-[3px] flex size-[20px] items-center justify-center rounded-full bg-[#5d4037] text-[11px] text-[#e5ddda]">
            D
          </span>
          <span className="absolute bottom-0 h-1 w-5 rounded-full bg-[#d99ce5]" />
        </div>
      </AppSlot>
    </div>
  );
}

function Taskbar() {
  return (
    <footer className={`flex h-[60px] items-center border-t border-[#3d3f3e] bg-[#2a2a2a] pb-[1px] text-[15px] leading-5 text-white ${segoe}`}>
      <div className="relative ml-[25px] h-[36px] w-[34px]">
        <svg viewBox="0 0 30 30" className="mt-[5px] size-[31px]">
          <path d="M7 20a7 7 0 0 1-.5-13.500 8.500 8.500 0 0 1 16 .5A6.800 6.800 0 0 1 24 20z" fill="#93bdf6" />
          <path d="M15 7c2 3.500 3.500 5 3.500 7.300a3.500 3.500 0 0 1-7 0C11.500 12 13 10.500 15 7z" fill="#2268e0" />
          <path d="M10.500 17c2 3.500 3.500 5 3.500 7.500a3.500 3.500 0 0 1-7 0C7 22 8.500 20.500 10.500 17zM22 17c2 3.500 3.500 5 3.500 7.500a3.500 3.500 0 0 1-7 0c0-2.500 1.500-4 3.500-7.500z" fill="#2a62ea" />
        </svg>
        <span className="absolute -top-[3px] right-[1px] flex size-5 items-center justify-center rounded-full bg-[#ff99a4] text-[13px] text-black">1</span>
      </div>
      <div className="-mt-[3px] ml-[5px] w-[466px]">
        <div className="tracking-[-0.260px]">32°C</div>
        <div className="tracking-[-0.320px] text-[#cfcfcf]">Heavy rain</div>
      </div>
      <svg viewBox="0 0 29 29" className="size-[29px]">
        <defs>
          <linearGradient id="win" x1="0" y1="0" x2="1" y2="1" gradientUnits="objectBoundingBox">
            <stop offset="0" stopColor="#79e3fc" />
            <stop offset="1" stopColor="#1f9df5" />
          </linearGradient>
        </defs>
        <path d="M1 0h13v14H0V1a1 1 0 0 1 1-1zM15 0h13a1 1 0 0 1 1 1v13H15zM0 15h14v14H1a1 1 0 0 1-1-1zM15 15h14v13a1 1 0 0 1-1 1H15z" fill="url(#win)" />
      </svg>
      <div className="ml-[17px] flex h-[40px] w-[275px] items-center rounded-full border border-[#5a5a5a] bg-[#444545] pl-[13px] text-[17px] text-[#d2d2d2]">
        <svg viewBox="0 0 20 20" className="size-5" fill="none" stroke="#efefef" strokeWidth="1.800">
          <circle cx="8.500" cy="8.500" r="7.200" />
          <path d="m13.800 13.800 5.200 5.200" strokeWidth="2.400" />
        </svg>
        <span className="ml-[12px] tracking-[-0.310px]">Search</span>
        <svg viewBox="0 0 38 34" className="mr-[17px] ml-auto h-[34px] w-[38px]">
          <path d="M7 20h6v14H7zM23 19h5v15h-5z" fill="#5d9fbd" fillOpacity=".25" />
          <path d="M2 33V10h5v23z" fill="#7fc0e6" />
          <path d="M3.300 12h2.400v4H3.300z" fill="#31526b" />
          <path d="M4 17h1.200v16H4z" fill="#c5e5f5" />
          <path d="M16 33l.5-17 1.300-5L19 0l1.200 11 1.300 5 .5 17z" fill="#2f8fd8" />
          <path d="M18.500 12h1.200v21h-1.200z" fill="#8bd0f5" />
          <path d="M30 33V16l1.600-4.500.8-3.500.8 3.500L34.800 16v17z" fill="#76c9b4" />
          <path d="M30 19h5M30 23h5M30 27h5" stroke="#3f8f86" />
          <path d="M0 33.500h38" stroke="#63c3e8" strokeOpacity=".6" />
        </svg>
      </div>
      <TaskbarApps />
      <div className="ml-auto flex items-center">
        <svg viewBox="0 0 14 8" className="w-[14px]" fill="none" stroke="#fff" strokeWidth="1.800">
          <path d="m1 7 6-6 6 6" />
        </svg>
        <svg viewBox="0 0 22 18" className="ml-[22px] w-[22px]">
          <path d="M6 15.500A5 5 0 0 1 5 6a6.500 6.500 0 0 1 12 1 4.500 4.500 0 0 1 0 8.500z" fill="#8c8c8c" />
          <path d="m2 0 18 18" stroke="#e3e3e3" strokeWidth="1.500" />
        </svg>
        <div className="ml-[20px] w-[34px] text-center tracking-[-0.500px]">
          <div>ENG</div>
          <div>IN</div>
        </div>
        <svg viewBox="0 0 20 17" className="ml-[20px] w-[20px]" fill="none" stroke="#fff" strokeWidth="1.600">
          <path d="M1 6.500a12.500 12.500 0 0 1 18 0M4 9.800a8.500 8.500 0 0 1 12 0M7 12.800a4.300 4.300 0 0 1 6 0" />
          <circle cx="10" cy="15" r="1.400" fill="#fff" stroke="none" />
        </svg>
        <svg viewBox="0 0 19 17" className="ml-[10px] w-[19px]" fill="none" stroke="#fff" strokeWidth="1.400">
          <path d="M1 6v5h3l5 4.500v-14L4 6zM11.500 5.500a4.500 4.500 0 0 1 0 6M13.500 3a8 8 0 0 1 0 11" />
          <path d="M15.500 1a11 11 0 0 1 0 15" stroke="#8a8a8a" />
        </svg>
        <svg viewBox="0 0 22 14" className="ml-[10px] w-[21px]" fill="none" stroke="#fff" strokeWidth="1.600">
          <rect x="1" y="1" width="17" height="12" rx="3" />
          <path d="M4.500 4v6M20.500 5v4" strokeWidth="2.200" />
        </svg>
        <div className="-mt-px ml-[18px] w-[80px] text-right">
          <div className="tracking-[-0.300px]">18:28</div>
          <div>28-08-2024</div>
        </div>
        <svg viewBox="0 0 16 19" className="mr-[27px] ml-[11px] w-4" fill="#f3b9f3">
          <path d="M8 0a6 6 0 0 1 6 6v5l2 4H0l2-4V6a6 6 0 0 1 6-6zM5 16.500h6a3 2.500 0 0 1-6 0z" />
        </svg>
      </div>
    </footer>
  );
}

export default function App() {
  return (
    <div className="flex h-[1080px] w-[1920px] flex-col overflow-hidden bg-white font-['Lato',sans-serif]">
      <BrowserTabs />
      <AddressBar />
      <SiteHeader />
      <div className="flex h-[840px] overflow-hidden bg-[#f7f7f7]">
        <Sidebar />
        <main className="flex-1 pt-[50px] pl-[55px]">
          <WelcomeBanner />
          <div className="mt-[25px] flex gap-[25px]">
            <div className="flex w-[286px] flex-col gap-[25px]">
              <ProfileCard />
              <CollegeBadgeCard />
            </div>
            <div className="w-[909px]">
              <SolvedCard />
              <h2 className="mt-[67px] mb-[21px] text-[26px] leading-8 font-semibold tracking-[0.580px] text-[#141414]">
                Data Structures &amp; Algorithms
              </h2>
              <DsaCard />
            </div>
          </div>
        </main>
        <Scrollbar />
      </div>
      <Taskbar />
    </div>
  );
}
